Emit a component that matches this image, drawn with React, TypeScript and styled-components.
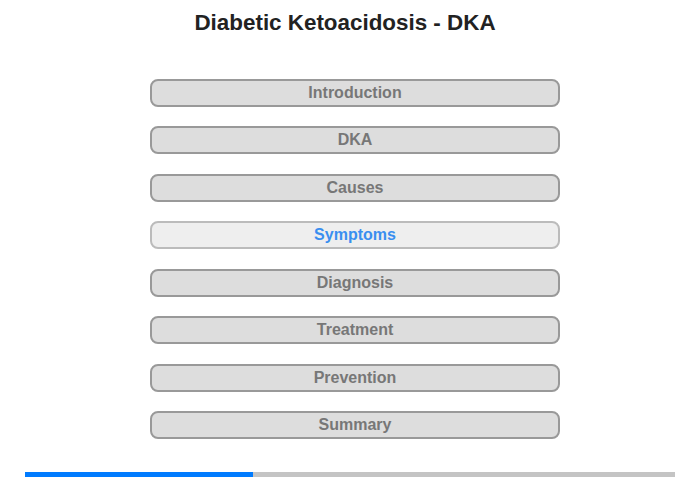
import React from "react";
import styled, { createGlobalStyle } from "styled-components";

const GlobalStyle = createGlobalStyle`
  html, body {
    margin: 0;
    padding: 0;
    background: #ffffff;
    font-family: "Liberation Sans", Arial, sans-serif;
  }
`;

const Page = styled.div`
  width: 700px;
  height: 480px;
  display: flex;
  flex-direction: column;
  align-items: center;
  box-sizing: border-box;
`;

const Title = styled.h1`
  margin: 10px 10px 0 0;
  height: 26px;
  line-height: 26px;
  font-size: 22.4px;
  font-weight: bold;
  color: #222222;
`;

const Menu = styled.nav`
  margin: 43px 0 0 10px;
  display: flex;
  flex-direction: column;
  gap: 19.43px;
`;

const MenuButton = styled.button<{ $active?: boolean }>`
  width: 410px;
  height: 28px;
  box-sizing: border-box;
  border-radius: 8px;
  border: 2px solid ${(p) => (p.$active ? "#bbbbbb" : "#999999")};
  background: ${(p) => (p.$active ? "#eeeeee" : "#dddddd")};
  color: ${(p) => (p.$active ? "#3a8ef0" : "#777777")};
  font-family: "Liberation Sans", Arial, sans-serif;
  font-size: 16px;
  font-weight: bold;
  padding: 0;
  cursor: pointer;
`;

const Progress = styled.div`
  margin-top: auto;
  margin-bottom: 3px;
  width: 650px;
  height: 5px;
  background: #c4c4c4;
`;

const ProgressFill = styled.div`
  height: 100%;
  background: #007bff;
`;

const sections = [
  "Introduction",
  "DKA",
  "Causes",
  "Symptoms",
  "Diagnosis",
  "Treatment",
  "Prevention",
  "Summary",
];

export default function App() {
  const current = 3;
  return (
    <>
      <GlobalStyle />
      <Page>
        <Title>Diabetic Ketoacidosis - DKA</Title>
        <Menu>
          {sections.map((s, i) => (
            <MenuButton key={s} $active={i === current}>
              {s}
            </MenuButton>
          ))}
        </Menu>
        <Progress>
          <ProgressFill style={{ width: `${(228 / 650) * 100}%` }} />
        </Progress>
      </Page>
    </>
  );
}
